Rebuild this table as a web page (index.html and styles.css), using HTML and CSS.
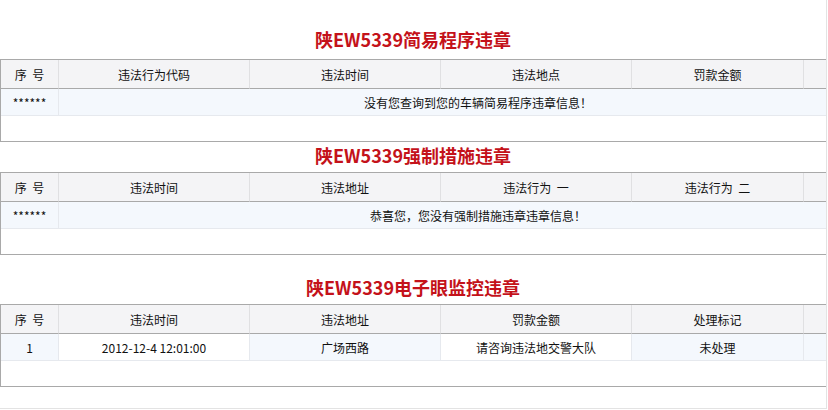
FILE: index.html
```html
<!DOCTYPE html>
<html lang="zh-CN">
<head>
<meta charset="utf-8">
<title>违章查询</title>
<link rel="stylesheet" href="styles.css">
</head>
<body>
<div class="frame">
  <section class="block block-first">
    <h2 class="title">陕EW5339简易程序违章</h2>
    <div class="clip">
      <table class="grid">
        <colgroup><col class="c0"><col class="c1"><col class="c2"><col class="c3"><col class="c4"><col class="c5"></colgroup>
        <tr class="head"><th>序&nbsp;&nbsp;号</th><th>违法行为代码</th><th>违法时间</th><th>违法地点</th><th>罚款金额</th><th></th></tr>
        <tr class="data"><td class="blue">******</td><td class="blue" colspan="5">没有您查询到您的车辆简易程序违章信息！</td></tr>
        <tr class="empty"><td colspan="6"></td></tr>
      </table>
    </div>
  </section>
  <section class="block block-second">
    <h2 class="title">陕EW5339强制措施违章</h2>
    <div class="clip">
      <table class="grid">
        <colgroup><col class="c0"><col class="c1"><col class="c2"><col class="c3"><col class="c4"><col class="c5"></colgroup>
        <tr class="head"><th>序&nbsp;&nbsp;号</th><th>违法时间</th><th>违法地址</th><th>违法行为&nbsp;&nbsp;一</th><th>违法行为&nbsp;&nbsp;二</th><th></th></tr>
        <tr class="data"><td class="blue">******</td><td class="blue" colspan="5">恭喜您，您没有强制措施违章违章信息！</td></tr>
        <tr class="empty"><td colspan="6"></td></tr>
      </table>
    </div>
  </section>
  <section class="block block-third">
    <h2 class="title">陕EW5339电子眼监控违章</h2>
    <div class="clip">
      <table class="grid">
        <colgroup><col class="c0"><col class="c1"><col class="c2"><col class="c3"><col class="c4"><col class="c5"></colgroup>
        <tr class="head"><th>序&nbsp;&nbsp;号</th><th>违法时间</th><th>违法地址</th><th>罚款金额</th><th>处理标记</th><th></th></tr>
        <tr class="data"><td class="blue">1</td><td class="white">2012-12-4 12:01:00</td><td class="blue">广场西路</td><td class="white">请咨询违法地交警大队</td><td class="blue">未处理</td><td class="blue"></td></tr>
        <tr class="empty"><td colspan="6"></td></tr>
      </table>
    </div>
  </section>
</div>
</body>
</html>
```
FILE: styles.css
```css
html, body {
  margin: 0;
  padding: 0;
  background: #ffffff;
}

body {
  font-family: "Noto Sans CJK SC", "DejaVu Sans", sans-serif;
  font-size: 12px;
  color: #111;
}

.frame {
  width: 826px;
  height: 408px;
  border-right: 1px solid #e3e3e3;
  border-bottom: 1px solid #e3e3e3;
  overflow: hidden;
}

.block-first {
  padding-top: 29px;
}

.block-second {
  padding-top: 3px;
}

.block-third {
  padding-top: 22px;
}

.title {
  margin: 0 0 7px 0;
  height: 20px;
  line-height: 20px;
  font-size: 18px;
  font-weight: bold;
  text-align: center;
  color: #c4121a;
}

.block-first .title {
  margin-bottom: 10px;
}

.clip {
  width: 826px;
  overflow: hidden;
}

.grid {
  width: 897px;
  table-layout: fixed;
  border-collapse: separate;
  border-spacing: 0;
  border-top: 1px solid #a9a9a9;
  border-left: 1px solid #a9a9a9;
  border-bottom: 1px solid #a9a9a9;
}

.c0 { width: 58px; }
.c1 { width: 191px; }
.c2 { width: 191px; }
.c3 { width: 191px; }
.c4 { width: 172px; }
.c5 { width: 94px; }

.grid th,
.grid td {
  padding: 0;
  text-align: center;
  font-weight: normal;
  font-size: 12px;
  white-space: nowrap;
}

.head th {
  height: 28px;
  background: #f4f4f6;
  border-right: 1px solid #e0e0e2;
  border-bottom: 1px solid #a9a9a9;
}

.data td {
  height: 26px;
  border-right: 1px solid #e6e9ee;
  border-bottom: 1px solid #e6e9ee;
}

.data td.blue {
  background: #f4f8fd;
}

.data td.white {
  background: #ffffff;
}

.empty td {
  height: 25px;
  background: #ffffff;
}
```
